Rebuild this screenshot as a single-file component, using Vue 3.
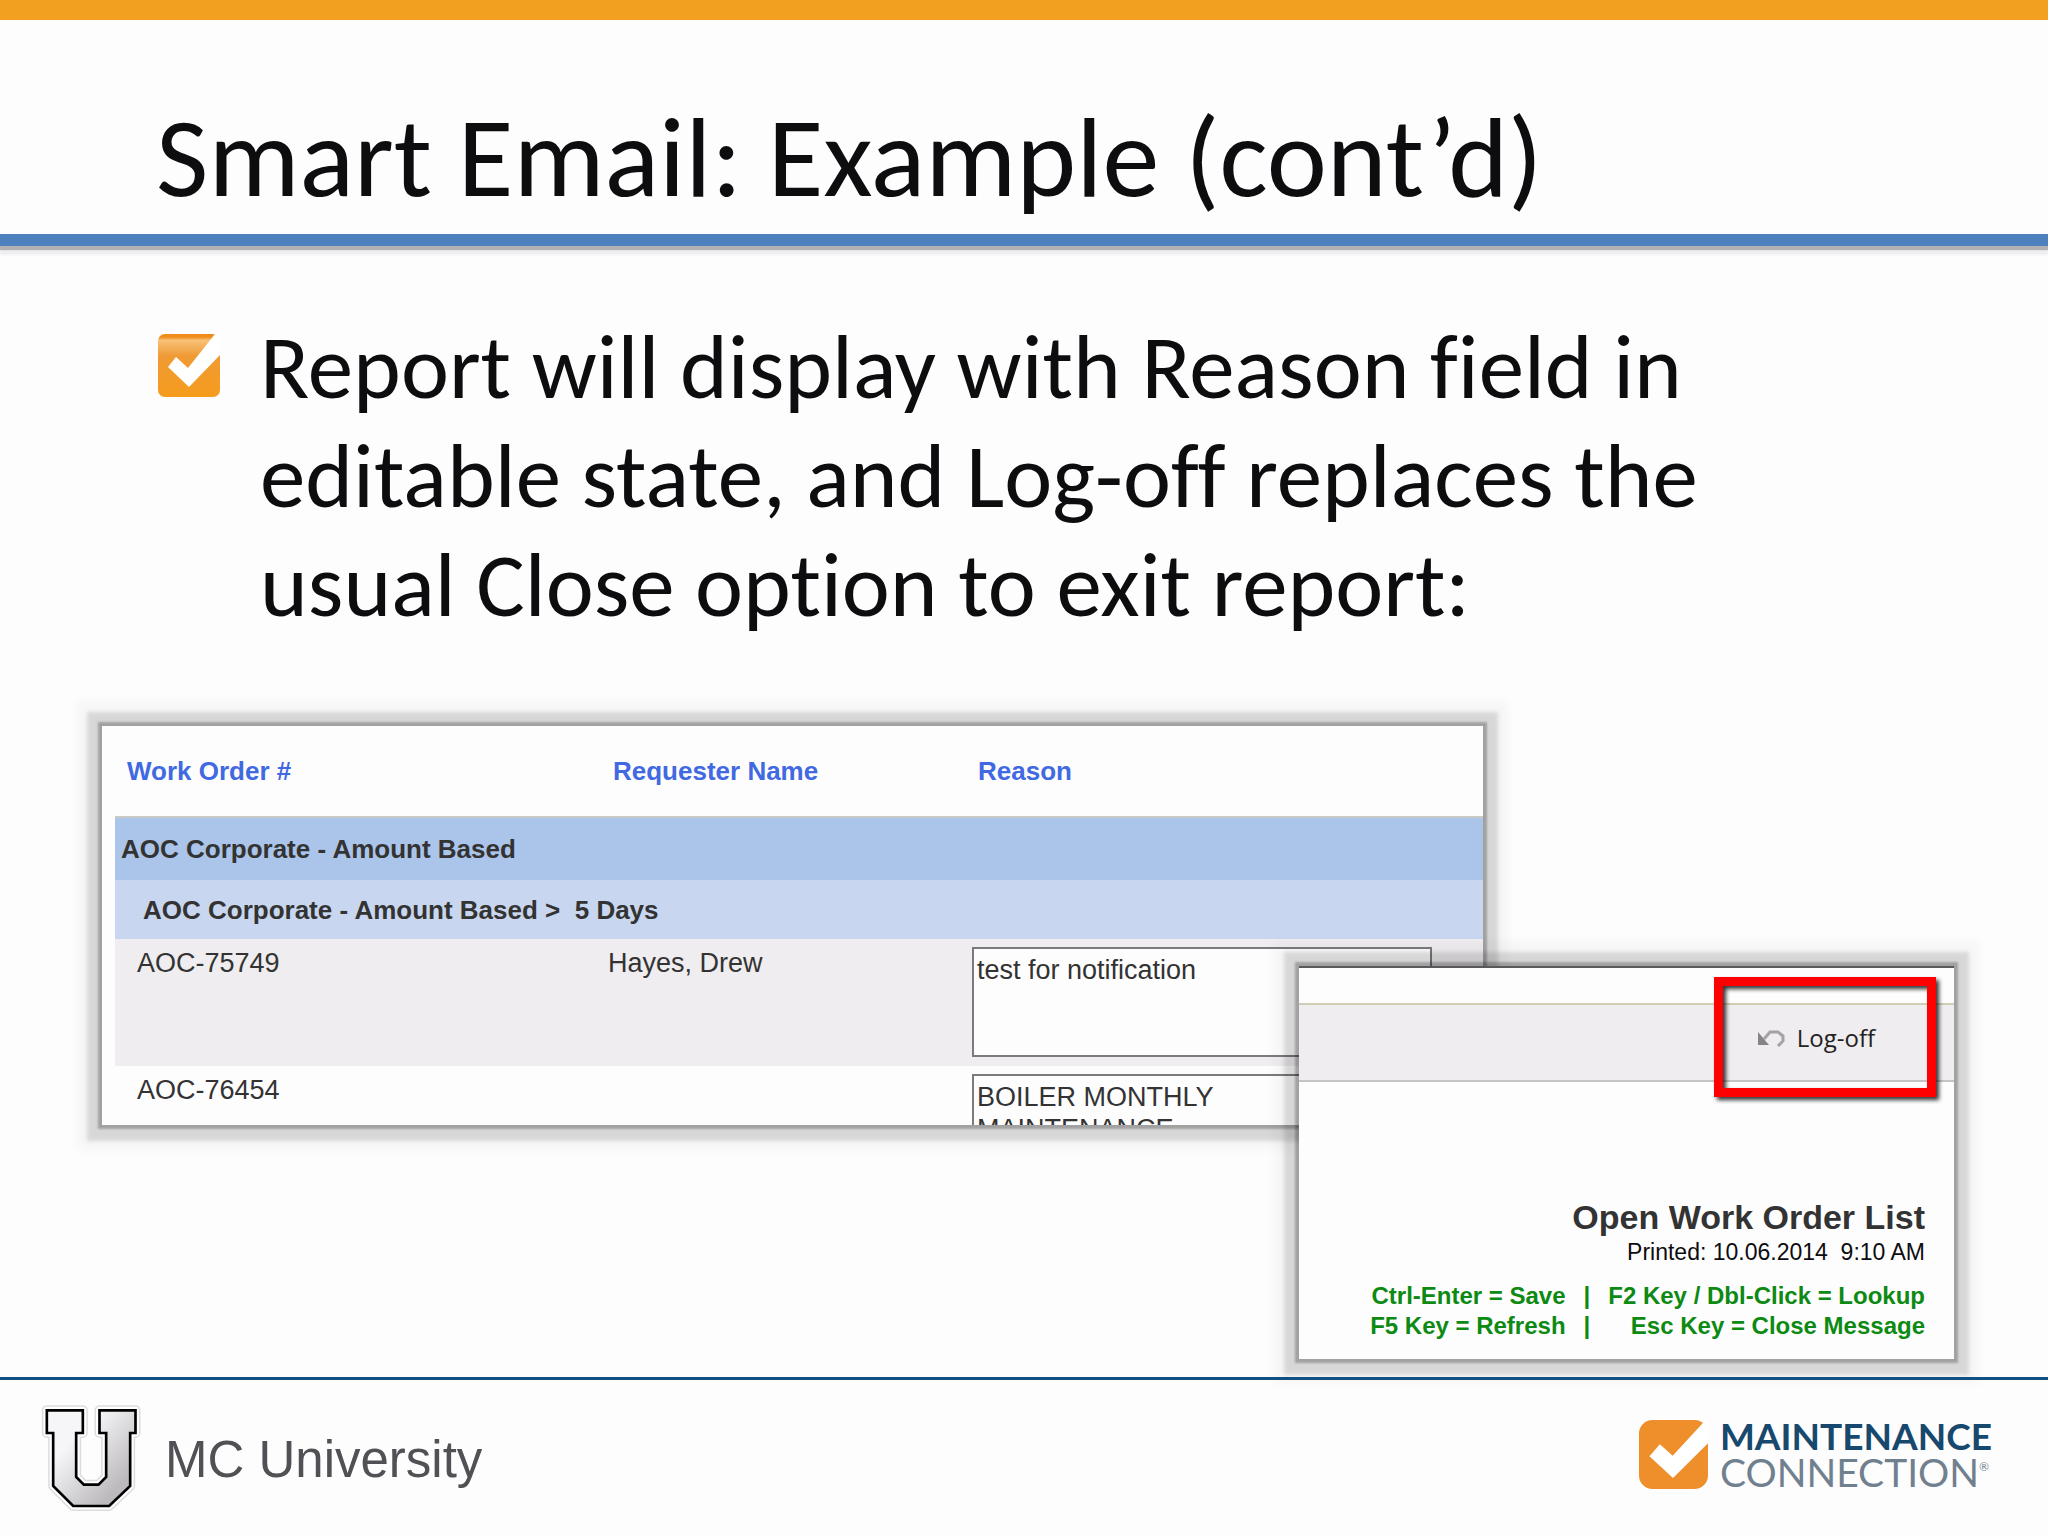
<template>
  <div class="slide">
    <header class="slide-header">
      <h1>Smart Email: Example (cont’d)</h1>
    </header>

    <main class="slide-body">
      <ul class="bullets">
        <li>
          <svg class="bullet-icon" viewBox="0 0 62 63" aria-hidden="true">
            <defs>
              <linearGradient id="bulletFill" x1="0" y1="0" x2="0" y2="1">
                <stop offset="0" stop-color="#ee8a18" />
                <stop offset="0.05" stop-color="#f08f1e" />
                <stop offset="0.1" stop-color="#f8c277" />
                <stop offset="0.35" stop-color="#f09a35" />
                <stop offset="1" stop-color="#f59c1c" />
              </linearGradient>
            </defs>
            <rect width="62" height="63" rx="7" fill="url(#bulletFill)" />
            <path d="M10 33 18 23 30 34 57 0 63 0 63 20 31 53z" fill="#fff" />
          </svg>
          <p>{{ bullet }}</p>
        </li>
      </ul>

      <div class="figures">
        <section class="shot report">
          <table>
            <colgroup>
              <col class="col-order" />
              <col class="col-name" />
              <col />
            </colgroup>
            <thead>
              <tr>
                <th v-for="col in columns" :key="col">{{ col }}</th>
              </tr>
            </thead>
            <tbody>
              <tr class="group">
                <td colspan="3">AOC Corporate - Amount Based</td>
              </tr>
              <tr class="subgroup">
                <td colspan="3">AOC Corporate - Amount Based &gt;&nbsp; 5 Days</td>
              </tr>
              <tr v-for="order in orders" :key="order.id" class="order">
                <td>{{ order.id }}</td>
                <td>{{ order.requester }}</td>
                <td class="reason">
                  <textarea v-model="order.reason" :aria-label="'Reason ' + order.id"></textarea>
                </td>
              </tr>
            </tbody>
          </table>
        </section>

        <section class="shot summary">
          <div class="toolbar">
            <button class="logoff">
              <svg viewBox="0 0 28 18" aria-hidden="true">
                <path d="M1 3V16H12z" fill="#858585" />
                <path d="M7 10 13 3H21L26 7V12L21 17" fill="none" stroke="#a3a3a3" stroke-width="3" />
              </svg>
              Log-off
            </button>
          </div>
          <div class="summary-text">
            <h2>Open Work Order List</h2>
            <p class="printed">Printed: 10.06.2014&nbsp; 9:10 AM</p>
            <div class="keys">
              <template v-for="row in shortcuts" :key="row[0]">
                <span>{{ row[0] }}</span>
                <span>|</span>
                <span>{{ row[1] }}</span>
              </template>
            </div>
          </div>
        </section>
      </div>
    </main>

    <footer class="slide-footer">
      <div class="university">
        <svg viewBox="120 126 308 330" aria-hidden="true">
          <defs>
            <linearGradient id="uFill" x1="0" y1="0" x2="1" y2="1">
              <stop offset="0.3" stop-color="#f6f5f7" />
              <stop offset="0.8" stop-color="#bcbabd" />
            </linearGradient>
          </defs>
          <g stroke-linejoin="round">
            <path :d="uShape" fill="none" stroke="#dddbde" stroke-width="30" />
            <path :d="uShape" fill="none" stroke="#fff" stroke-width="21" />
          </g>
          <path :d="uShape" fill="url(#uFill)" stroke="#000" stroke-width="8" />
        </svg>
        <span>MC University</span>
      </div>
      <div class="brand">
        <svg viewBox="0 0 205 205" aria-hidden="true">
          <rect width="205" height="205" rx="40" fill="#ee8f2b" />
          <path d="M31 108 62 72 100 106 198 0 210 0 210 64 101 172z" fill="#fff" />
        </svg>
        <div class="brand-name">
          <span class="top">MAINTENANCE</span>
          <span class="bottom">CONNECTION<sup>®</sup></span>
        </div>
      </div>
    </footer>
  </div>
</template>

<script setup>
import { reactive } from 'vue'

const bullet = 'Report will display with Reason field in editable state, and Log-off replaces the usual Close option to exit report:'

const columns = ['Work Order #', 'Requester Name', 'Reason']

const orders = reactive([
  { id: 'AOC-75749', requester: 'Hayes, Drew', reason: 'test for notification' },
  { id: 'AOC-76454', requester: '', reason: 'BOILER MONTHLY\nMAINTENANCE' }
])

const shortcuts = [
  ['Ctrl-Enter = Save', 'F2 Key / Dbl-Click = Lookup'],
  ['F5 Key = Refresh', 'Esc Key = Close Message']
]

const uShape = 'M140 148H248V216H228V348L251 371H295L318 348V216H298V148H406V216H390V375L327 435H219L159 375V216H140z'
</script>

<style>
body {
  margin: 0;
  background: #fefdfe;
}
</style>

<style scoped>
.slide {
  display: flex;
  flex-direction: column;
  min-height: 100vh;
  color: #0d0c0f;
  font-family: Carlito, Calibri, Lato, sans-serif;
  font-variant-ligatures: none;
  overflow: hidden;
}
h1, h2, p, ul {
  margin: 0;
  padding: 0;
  font-weight: normal;
}
.slide-header {
  box-sizing: border-box;
  height: 246px;
  padding: 87px 156px 0;
  border-top: 20px solid #f1a11f;
  border-bottom: 12px solid #4d80bd;
  box-shadow: 0 4px 1px #b2b1b3, 0 9px 2px #efedf0;
}
h1 {
  font-size: 114px;
  line-height: 100px;
  white-space: nowrap;
}
.slide-body {
  flex: 1;
}
.bullets {
  list-style: none;
  padding: 66px 300px 0 158px;
}
.bullets li {
  display: flex;
  gap: 40px;
}
.bullet-icon {
  flex: none;
  width: 62px;
  height: 63px;
  margin-top: 22px;
}
.bullets p {
  font-size: 91px;
  line-height: 109px;
}
.figures {
  display: grid;
  padding: 87px 94px 0 102px;
  font-family: "Liberation Sans", Arial, sans-serif;
}
.shot {
  grid-area: 1 / 1;
  background: #fefdfe;
  overflow: hidden;
  box-shadow: 0 0 2px 4px rgba(0, 0, 0, 0.25), 0 1px 4px 15px rgba(0, 0, 0, 0.12), 0 0 10px 25px rgba(0, 0, 0, 0.03);
}
.report {
  width: 1381px;
  max-width: 75%;
  height: 399px;
  padding-left: 13px;
  box-sizing: border-box;
}
table {
  width: 100%;
  border-collapse: collapse;
  table-layout: fixed;
  font-size: 27px;
  line-height: 32px;
  color: #333;
}
.col-order {
  width: 486px;
}
.col-name {
  width: 365px;
}
th, td {
  padding: 0;
  text-align: left;
}
th {
  height: 90px;
  padding-left: 12px;
  font-size: 26px;
  color: #4169e1;
}
.group td {
  height: 62px;
  padding-left: 6px;
  border-top: 2px solid #c9cbc4;
  background: #abc4ea;
  font-size: 26px;
  font-weight: bold;
}
.subgroup td {
  height: 59px;
  padding-left: 28px;
  background: #c8d7ef;
  font-size: 26px;
  font-weight: bold;
}
.order td {
  height: 119px;
  padding: 8px 0 0 22px;
  vertical-align: top;
}
.order td + td {
  padding-left: 7px;
}
.order td.reason {
  padding-left: 6px;
}
.order:nth-child(odd) td {
  background: #efedef;
}
textarea {
  display: block;
  box-sizing: border-box;
  width: 460px;
  height: 110px;
  padding: 5px 3px;
  border: 2px solid #7b7a7c;
  border-radius: 0;
  background: #fefdfe;
  color: #333;
  font: 27px/32px "Liberation Sans", Arial, sans-serif;
  resize: none;
  overflow: hidden;
}
.summary {
  box-sizing: border-box;
  width: 655px;
  height: 393px;
  margin-top: 240px;
  padding-top: 35px;
  justify-self: end;
  border-top: 2px solid #59585a;
}
.toolbar {
  display: flex;
  justify-content: flex-end;
  height: 75px;
  padding-right: 18px;
  border-top: 2px solid #cfceb4;
  border-bottom: 2px solid #c4c3c5;
  background: #efedef;
}
.logoff {
  position: relative;
  display: flex;
  flex: none;
  align-items: center;
  justify-content: center;
  gap: 12px;
  box-sizing: border-box;
  width: 222px;
  padding: 0 18px 10px 0;
  border: none;
  background: none;
  color: #222;
  font: 24px/32px "Open Sans", "Noto Sans", sans-serif;
}
/* red callout frame, taller than the toolbar */
.logoff::after {
  content: '';
  position: absolute;
  inset: -28px 0 -17px;
  border: 9px solid #fe0000;
  filter: drop-shadow(3px 3px 2px rgba(0, 0, 0, 0.8));
}
.logoff svg {
  width: 28px;
  height: 18px;
}
.summary-text {
  padding: 115px 29px 0 0;
  text-align: right;
}
h2 {
  font-size: 34px;
  line-height: 40px;
  font-weight: bold;
  color: #333;
}
.printed {
  font-size: 23px;
  line-height: 30px;
}
.keys {
  display: grid;
  grid-template-columns: auto auto auto;
  justify-content: end;
  column-gap: 18px;
  margin-top: 14px;
  font-size: 24px;
  line-height: 30px;
  font-weight: bold;
  color: #0c8a12;
}
.slide-footer {
  position: relative;
  display: flex;
  align-items: center;
  justify-content: space-between;
  box-sizing: border-box;
  height: 159px;
  padding: 0 56px 0 40px;
  border-top: 3px solid #0f5080;
}
.university {
  display: flex;
  align-items: center;
  gap: 22px;
  color: #515055;
  font: 51px/60px "Liberation Sans", Arial, sans-serif;
}
.university span {
  padding-top: 4px;
}
.university svg {
  width: 103px;
  height: 110px;
}
.brand {
  display: flex;
  align-items: center;
  gap: 12px;
  padding-bottom: 8px;
}
.brand svg {
  width: 69px;
  height: 69px;
}
.brand-name {
  display: flex;
  flex-direction: column;
  font: 37px/36px Lato, sans-serif;
}
.top {
  color: #17486d;
  font-weight: bold;
}
.bottom {
  color: #71808f;
  font-size: 39px;
}
sup {
  font-size: 12px;
  line-height: 12px;
  vertical-align: 16px;
}
</style>
